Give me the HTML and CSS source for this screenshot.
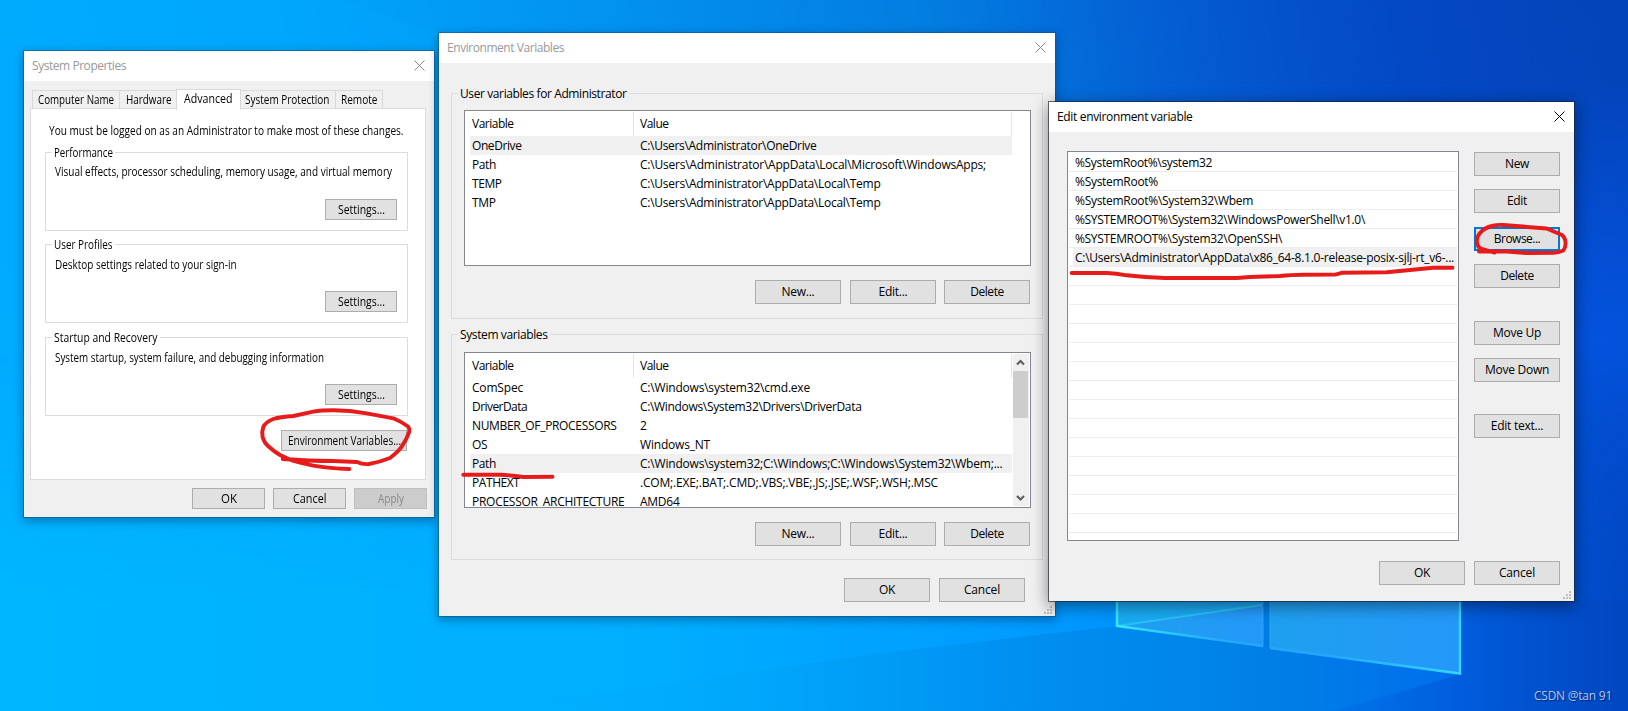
FILE: index.html
```html
<!DOCTYPE html>
<html lang="en">
<head>
<meta charset="utf-8">
<title>Environment Variables</title>
<link rel="stylesheet" href="styles.css">
</head>
<body>
<main class="desktop">
  <svg class="wallpaper" width="1628" height="711" viewBox="0 0 1628 711" aria-hidden="true">
    <defs>
      <linearGradient id="sky" gradientUnits="userSpaceOnUse" x1="0" y1="420" x2="1628" y2="180">
        <stop offset="0" stop-color="#00aeff"/><stop offset=".2" stop-color="#00a6fc"/>
        <stop offset=".4" stop-color="#0292f0"/><stop offset=".6" stop-color="#037ce0"/>
        <stop offset=".74" stop-color="#0462d8"/><stop offset=".88" stop-color="#034dd0"/><stop offset="1" stop-color="#0348c4"/>
      </linearGradient>
      <linearGradient id="floor" gradientUnits="userSpaceOnUse" x1="0" y1="0" x2="1628" y2="0">
        <stop offset="0" stop-color="#00b6ff"/><stop offset=".4" stop-color="#00aeff"/><stop offset=".62" stop-color="#009cff"/>
        <stop offset=".7" stop-color="#0092fc"/><stop offset=".84" stop-color="#0072ea"/><stop offset=".9" stop-color="#0060e0"/><stop offset="1" stop-color="#0148c4"/>
      </linearGradient>
      <linearGradient id="fade" x1="0" y1="0" x2="0" y2="1">
        <stop offset=".5" stop-color="#fff" stop-opacity="0"/><stop offset=".85" stop-color="#fff"/>
      </linearGradient>
      <mask id="low"><rect width="1628" height="711" fill="url(#fade)"/></mask>
      <linearGradient id="shade" gradientUnits="userSpaceOnUse" x1="480" y1="0" x2="1461" y2="0">
        <stop offset="0" stop-color="#00b0fc" stop-opacity="0"/><stop offset=".28" stop-color="#00a6fa" stop-opacity=".8"/><stop offset=".55" stop-color="#0090f0"/><stop offset=".8" stop-color="#0080e6"/><stop offset="1" stop-color="#006eec"/>
      </linearGradient>
      <linearGradient id="corner" gradientUnits="userSpaceOnUse" x1="1335" y1="0" x2="1628" y2="0">
        <stop offset="0" stop-color="#0070e4"/><stop offset=".4" stop-color="#005cdc"/><stop offset=".65" stop-color="#024fcc"/><stop offset="1" stop-color="#0244be"/>
      </linearGradient>
      <radialGradient id="glow" gradientUnits="userSpaceOnUse" cx="1600" cy="340" r="260">
        <stop offset="0" stop-color="#0454e0" stop-opacity=".9"/><stop offset="1" stop-color="#0454e0" stop-opacity="0"/>
      </radialGradient>
      <radialGradient id="dusk" gradientUnits="userSpaceOnUse" cx="1628" cy="0" r="620">
        <stop offset="0" stop-color="#0340b0" stop-opacity=".55"/><stop offset="1" stop-color="#0340b0" stop-opacity="0"/>
      </radialGradient>
      <linearGradient id="pane" x1="0" y1="0" x2="1" y2="0">
        <stop offset="0" stop-color="#1ea0ee"/><stop offset="1" stop-color="#2498fa"/>
      </linearGradient>
      <linearGradient id="edge" gradientUnits="userSpaceOnUse" x1="1117" y1="0" x2="1461" y2="0">
        <stop offset="0" stop-color="#35e8fc"/><stop offset=".3" stop-color="#24a8fa"/><stop offset=".6" stop-color="#24a4ff"/><stop offset="1" stop-color="#35d6fd"/>
      </linearGradient>
    </defs>
    <rect width="1628" height="711" fill="url(#sky)"/>
    <polygon points="0,0 340,0 520,60 520,711 0,711" fill="#00aaff" opacity=".3"/>
    <rect width="1628" height="711" fill="url(#dusk)"/>
    <rect width="1628" height="711" fill="url(#glow)"/>
    <rect width="1628" height="711" fill="url(#floor)" mask="url(#low)"/>
    <polygon points="1117,626 1461,674 1335,711 480,711 882,653" fill="url(#shade)"/>
    <polygon points="1461,674 1461,600 1628,600 1628,711 1335,711" fill="url(#corner)" opacity=".6"/>
    <polygon points="1117,560 1263,560 1263,646 1117,626" fill="url(#pane)"/>
    <polygon points="1117,560 1263,560 1263,605 1117,626" fill="#18b0f4" opacity=".6"/>
    <path d="M1117 626 1262 605" stroke="#28c0f8" stroke-width="2"/>
    <polygon points="1263,560 1270,560 1270,648 1263,646" fill="#007ce2"/>
    <polygon points="1270,560 1461,560 1461,674 1270,648" fill="url(#pane)"/>
    <path d="M1263 560V646M1270 560V648" stroke="#28a6f8" stroke-width="1"/>
    <path d="M1117 560V626L1263 646M1270 648 1460 673.500V560" stroke="url(#edge)" stroke-width="2.500" fill="none"/>
  </svg>

  <section class="window props">
    <header class="titlebar inactive"><span data-w="94">System Properties</span>
      <svg class="close" width="11" height="11" viewBox="0 0 11 11"><path d="M.5.5l10 10M10.500.5l-10 10"/></svg></header>
    <nav class="tabs">
      <div class="tab name"><span data-w="76">Computer Name</span></div><div class="tab hard"><span data-w="45.500">Hardware</span></div><div class="tab active"><span data-w="48.500">Advanced</span></div><div class="tab prot"><span data-w="84.500">System Protection</span></div><div class="tab remote"><span data-w="36.500">Remote</span></div>
    </nav>
    <div class="pane">
      <p class="notice"><span data-w="354.500">You must be logged on as an Administrator to make most of these changes.</span></p>
      <div class="group perf"><h2><span data-w="59">Performance</span></h2><p><span data-w="337">Visual effects, processor scheduling, memory usage, and virtual memory</span></p><button class="btn"><span data-w="47">Settings...</span></button></div>
      <div class="group prof"><h2><span data-w="58.500">User Profiles</span></h2><p><span data-w="181.500">Desktop settings related to your sign-in</span></p><button class="btn"><span data-w="47">Settings...</span></button></div>
      <div class="group start"><h2><span data-w="103.500">Startup and Recovery</span></h2><p><span data-w="269">System startup, system failure, and debugging information</span></p><button class="btn"><span data-w="47">Settings...</span></button></div>
      <button class="btn env"><span data-w="113">Environment Variables...</span></button>
    </div>
    <footer class="actions"><button class="btn"><span data-w="16">OK</span></button><button class="btn"><span data-w="33.500">Cancel</span></button><button class="btn disabled"><span data-w="26">Apply</span></button></footer>
  </section>

  <section class="window vars">
    <header class="titlebar inactive"><span data-w="117">Environment Variables</span>
      <svg class="close" width="11" height="11" viewBox="0 0 11 11"><path d="M.5.5l10 10M10.500.5l-10 10"/></svg></header>
    <div class="group user"><h2><span data-w="166.500">User variables for Administrator</span></h2>
      <div class="list"><div class="table">
        <div class="head"><span class="c1"><span data-w="41.500">Variable</span></span><span class="c2"><span data-w="28.500">Value</span></span></div>
        <div class="row sel"><span class="c1"><span data-w="49.500">OneDrive</span></span><span class="c2"><span data-w="176.500">C:\Users\Administrator\OneDrive</span></span></div>
        <div class="row"><span class="c1"><span data-w="24">Path</span></span><span class="c2"><span data-w="346">C:\Users\Administrator\AppData\Local\Microsoft\WindowsApps;</span></span></div>
        <div class="row"><span class="c1"><span data-w="29.500">TEMP</span></span><span class="c2"><span data-w="240.500">C:\Users\Administrator\AppData\Local\Temp</span></span></div>
        <div class="row"><span class="c1"><span data-w="23.500">TMP</span></span><span class="c2"><span data-w="240.500">C:\Users\Administrator\AppData\Local\Temp</span></span></div>
      </div></div>
      <div class="buttons"><button class="btn"><span data-w="33">New...</span></button><button class="btn"><span data-w="29">Edit...</span></button><button class="btn"><span data-w="33.500">Delete</span></button></div>
    </div>
    <div class="group system"><h2><span data-w="87.500">System variables</span></h2>
      <div class="list"><div class="table">
        <div class="head"><span class="c1"><span data-w="41.500">Variable</span></span><span class="c2"><span data-w="28.500">Value</span></span></div>
        <div class="row"><span class="c1"><span data-w="51">ComSpec</span></span><span class="c2"><span data-w="170">C:\Windows\system32\cmd.exe</span></span></div>
        <div class="row"><span class="c1"><span data-w="55">DriverData</span></span><span class="c2"><span data-w="221.500">C:\Windows\System32\Drivers\DriverData</span></span></div>
        <div class="row"><span class="c1"><span data-w="144.500">NUMBER_OF_PROCESSORS</span></span><span class="c2"><span>2</span></span></div>
        <div class="row"><span class="c1"><span data-w="15.500">OS</span></span><span class="c2"><span data-w="70">Windows_NT</span></span></div>
        <div class="row sel"><span class="c1"><span data-w="24">Path</span></span><span class="c2"><span data-w="362.500">C:\Windows\system32;C:\Windows;C:\Windows\System32\Wbem;...</span></span></div>
        <div class="row"><span class="c1"><span data-w="47.500">PATHEXT</span></span><span class="c2"><span data-w="298">.COM;.EXE;.BAT;.CMD;.VBS;.VBE;.JS;.JSE;.WSF;.WSH;.MSC</span></span></div>
        <div class="row"><span class="c1"><span data-w="152.500">PROCESSOR_ARCHITECTURE</span></span><span class="c2"><span data-w="39.500">AMD64</span></span></div>
      </div>
      <div class="scrollbar">
        <svg width="16" height="17" viewBox="0 0 16 17"><path d="M4 10.500l3.500-3.500 3.500 3.500"/></svg>
        <div class="thumb"></div>
        <svg width="16" height="17" viewBox="0 0 16 17"><path d="M4 7l3.500 3.500L11 7"/></svg>
      </div></div>
      <div class="buttons"><button class="btn"><span data-w="33">New...</span></button><button class="btn"><span data-w="29">Edit...</span></button><button class="btn"><span data-w="33.500">Delete</span></button></div>
    </div>
    <footer class="actions"><button class="btn"><span data-w="16">OK</span></button><button class="btn"><span data-w="36">Cancel</span></button></footer>
    <svg class="grip" width="8" height="8" viewBox="0 0 8 8"><path d="M6 0h2v2H6zM3 3h2v2H3zM6 3h2v2H6zM0 6h2v2H0zM3 6h2v2H3zM6 6h2v2H6z"/></svg>
  </section>

  <section class="window edit">
    <header class="titlebar"><span data-w="135.500">Edit environment variable</span>
      <svg class="close" width="11" height="11" viewBox="0 0 11 11"><path d="M.5.5l10 10M10.500.5l-10 10"/></svg></header>
    <div class="body">
      <div class="paths">
        <div class="path"><span data-w="137">%SystemRoot%\system32</span></div>
        <div class="path"><span data-w="83">%SystemRoot%</span></div>
        <div class="path"><span data-w="178">%SystemRoot%\System32\Wbem</span></div>
        <div class="path"><span data-w="290">%SYSTEMROOT%\System32\WindowsPowerShell\v1.0\</span></div>
        <div class="path"><span data-w="207">%SYSTEMROOT%\System32\OpenSSH\</span></div>
        <div class="path sel"><span data-w="379">C:\Users\Administrator\AppData\x86_64-8.1.0-release-posix-sjlj-rt_v6-...</span></div>
        <div class="path"></div><div class="path"></div><div class="path"></div><div class="path"></div><div class="path"></div><div class="path"></div><div class="path"></div>
        <div class="path"></div><div class="path"></div><div class="path"></div><div class="path"></div><div class="path"></div><div class="path"></div><div class="path"></div>
      </div>
      <div class="side">
        <button class="btn"><span data-w="24">New</span></button>
        <button class="btn"><span data-w="20">Edit</span></button>
        <button class="btn focus"><span data-w="46.500">Browse...</span></button>
        <button class="btn del"><span data-w="33.500">Delete</span></button>
        <button class="btn up"><span data-w="48">Move Up</span></button>
        <button class="btn"><span data-w="64">Move Down</span></button>
        <button class="btn text"><span data-w="52.500">Edit text...</span></button>
      </div>
    </div>
    <footer class="actions"><button class="btn"><span data-w="16">OK</span></button><button class="btn"><span data-w="36">Cancel</span></button></footer>
    <svg class="grip" width="8" height="8" viewBox="0 0 8 8"><path d="M6 0h2v2H6zM3 3h2v2H3zM6 3h2v2H6zM0 6h2v2H0zM3 6h2v2H3zM6 6h2v2H6z"/></svg>
  </section>

  <svg class="marks" width="1628" height="711" viewBox="0 0 1628 711" aria-hidden="true">
    <path d="M282.700 459Q310 461 333 461L357 462Q362 464.500 369 464Q380 462 390 458Q398 452 401.700 446.700Q407 439 409.300 431.700Q409.500 428 408 426.500Q401 421.500 393.300 418.300L366.700 413.300Q350 410.500 333.300 410.300Q321 410.300 313.300 411.700L293.300 416Q280 417 273.300 419Q265 422.500 263.300 427Q261.500 432 262.600 437Q264 442.500 268 446Q274 451.500 280 455Q290 460.500 300 462.700L313.300 465.700Q330 468.500 349.300 469"/>
    <path d="M463.300 474.700H500Q512 475.300 523.300 477L552.500 476.700"/>
    <path d="M1071.700 273H1106.700Q1116 273.500 1126.700 275.300Q1145 277.500 1165 278H1236.700L1250 277L1280 276Q1290 274.800 1303.300 274.700L1335 274.600Q1338 274 1341.700 272.800L1386.700 272.300L1433.300 267.700H1452.500"/>
    <path d="M1494.500 252.600L1480 248.300Q1476.500 245 1476.900 240.500Q1477.500 235 1480.500 232.500Q1485 227.500 1492 226Q1497 224.600 1503.300 225L1546.700 228.500L1562 235Q1565.500 238 1565.600 243.300Q1565.500 248 1563.300 250.500Q1559 252.500 1553.300 252.700L1526.700 253L1506.700 251.500H1479"/>
  </svg>
  <p class="credit"><span data-w="78">CSDN @tan 91</span></p>
</main>
<script src="fit.js"></script>
</body>
</html>
```

FILE: styles.css
```css
* { box-sizing: border-box; }
body { margin: 0; overflow: hidden; font-family: "Open Sans", "Noto Sans", sans-serif; font-size: 12px; line-height: 16px; color: #000; }
h2, p { margin: 0; font: inherit; }
span[data-w] { display: inline-block; white-space: pre; }
.desktop { position: relative; width: 1628px; height: 711px; overflow: hidden; background: #0390f0; }
.wallpaper, .marks { position: absolute; left: 0; top: 0; display: block; }
.marks { pointer-events: none; }
.marks path { fill: none; stroke: #e81b1b; stroke-width: 3.900; stroke-linecap: round; stroke-linejoin: round; }

.window { position: absolute; display: flex; flex-direction: column; background: #f0f0f0; border: 1px solid rgba(20, 75, 115, .5); background-clip: padding-box; box-shadow: 0 3px 9px rgba(0, 20, 50, .36); }
.props { left: 23px; top: 50px; width: 412px; height: 468px; }
.vars { left: 438px; top: 32px; width: 618px; height: 585px; }
.edit { left: 1048px; top: 101px; width: 527px; height: 501px; border-color: rgba(25, 35, 50, .65); box-shadow: 0 4px 15px rgba(0, 0, 0, .45); }
.titlebar { flex: none; height: 30px; padding: 0 9px 0 8px; display: flex; align-items: center; justify-content: space-between; background: #fff; }
.titlebar.inactive { color: #999; }
.close { fill: none; stroke: #000; stroke-width: 1; margin-top: -2px; }
.inactive .close { stroke: #888; }

.btn { flex: none; width: 86px; height: 24px; padding: 0; border: 1px solid #adadad; border-radius: 0; background: #e1e1e1; font: inherit; line-height: 16px; color: #000; display: flex; justify-content: center; align-items: center; }
.btn.focus { border: 2px solid #0078d7; }
.btn.disabled { background: #ccc; border-color: #bfbfbf; color: #888; }

.group { display: flex; flex-direction: column; border: 1px solid #dcdcdc; }
.group h2 { align-self: flex-start; height: 16px; margin: -8px 0 0 6px; padding: 0 2px; background: #f0f0f0; }

/* System Properties */
.tabs { flex: none; display: flex; align-items: flex-end; height: 28px; margin: 0 8px; }
.tab { height: 19px; display: flex; align-items: center; justify-content: center; border: 1px solid #d9d9d9; border-left-width: 0; border-bottom: 0; background: #f0f0f0; }
.name { width: 88px; border-left-width: 1px; }
.hard { width: 56px; border-right: 0; padding-left: 2px; }
.tab.active { position: relative; z-index: 1; width: 65px; height: 21px; margin-bottom: -1px; border-left-width: 1px; background: #fff; padding-bottom: 2px; padding-right: 1px; }
.prot { width: 95px; padding-right: 1px; }
.remote { width: 47px; padding-left: 1px; }
.pane { flex: none; width: 396px; height: 372px; margin: -1px 0 0 6px; padding: 13px 17px 0 14px; display: flex; flex-direction: column; border: 1px solid #dcdcdc; background: #fff; }
.notice { padding-left: 4px; height: 30px; padding-top: 1px; }
.props .group { flex: none; width: 363px; height: 79px; }
.props .group h2 { background: #fff; }
.props .group p { padding: 3px 0 0 9px; }
.prof { margin-top: 13px; }
.start { margin-top: 14px; }
.props .group .btn { align-self: flex-end; width: 72px; height: 21px; margin: auto 10px 10px 0; }
.props .prof p, .props .start p { padding-top: 4px; }
.env { width: 126px; height: 21px; margin: 14px 1px 0 0; align-self: flex-end; }
.props .actions { gap: 8px; padding: 8px 7px 0 0; }
.props .actions .btn { width: 73px; height: 21px; }
.actions { display: flex; justify-content: flex-end; }

/* Environment Variables */
.vars .group { flex: none; width: 592px; height: 226px; margin-left: 12px; }
.vars .user { margin-top: 30px; }
.vars .system { margin-top: 15px; }
.list { flex: none; display: flex; width: 567px; height: 156px; margin: 8px 0 0 12px; padding: 1px 1px 1px 5px; border: 1px solid #828790; background: #fff; overflow: hidden; }
.system .list { margin-top: 9px; }
.table { flex: none; width: 542px; }
.head { display: flex; align-items: center; height: 24px; border-right: 1px solid #e5e5e5; }
.head .c1 { height: 24px; line-height: 24px; border-right: 1px solid #e5e5e5; }
.c1 { flex: none; width: 164px; padding-left: 2px; }
.c2 { padding-left: 6px; }
.row { display: flex; align-items: center; height: 19px; line-height: 18px; }
.sel { background: #f0f0f0; }
.scrollbar { display: flex; flex-direction: column; width: 16px; height: 152px; margin-left: 1px; background: #f0f0f0; }
.scrollbar svg { display: block; fill: none; stroke: #606060; stroke-width: 2.200; }
.thumb { width: 15px; height: 47px; margin-bottom: auto; background: #cdcdcd; }
.buttons { display: flex; justify-content: flex-end; gap: 9px; margin: 14px 12px 0 0; }
.buttons .btn:last-child { margin-left: -1px; }
.vars .actions { gap: 9px; padding: 18px 30px 0 0; }
.grip { position: absolute; right: 3px; bottom: 2px; fill: #bfbfbf; }

/* Edit environment variable */
.body { flex: none; display: flex; gap: 15px; padding: 19px 14px 0 18px; }
.paths { flex: none; width: 392px; height: 390px; padding: 1px; border: 1px solid #828790; background: #fff; overflow: hidden; }
.path { height: 19px; padding: 1px 0 0 6px; line-height: 18px; border-bottom: 1px solid #ededed; }
.path.sel { background: linear-gradient(90deg, #fff 4px, #f0f0f0 4px); }
.side { display: flex; flex-direction: column; gap: 13px; padding-top: 1px; }
.focus { margin-top: 1px; }
.up { margin-top: 20px; }
.text { margin-top: 19px; }
.edit .actions { gap: 9px; padding: 20px 14px 0 0; }

.credit { position: absolute; right: 16px; top: 688px; font-size: 12px; color: #b4c8ea; text-shadow: 1px 1px 1px rgba(0, 20, 80, .7); }
```

FILE: fit.js
```js
document.querySelectorAll("span[data-w]").forEach(function (el) {
  var natural = el.getBoundingClientRect().width;
  var target = Number(el.dataset.w);
  if (el.closest(".tabs, .pane, .props .actions")) {
    el.style.width = target + "px";
    el.style.transformOrigin = "left center";
    el.style.transform = "scaleX(" + target / natural + ")";
  } else {
    el.style.letterSpacing = (target - natural) / el.textContent.length + "px";
  }
});
```
